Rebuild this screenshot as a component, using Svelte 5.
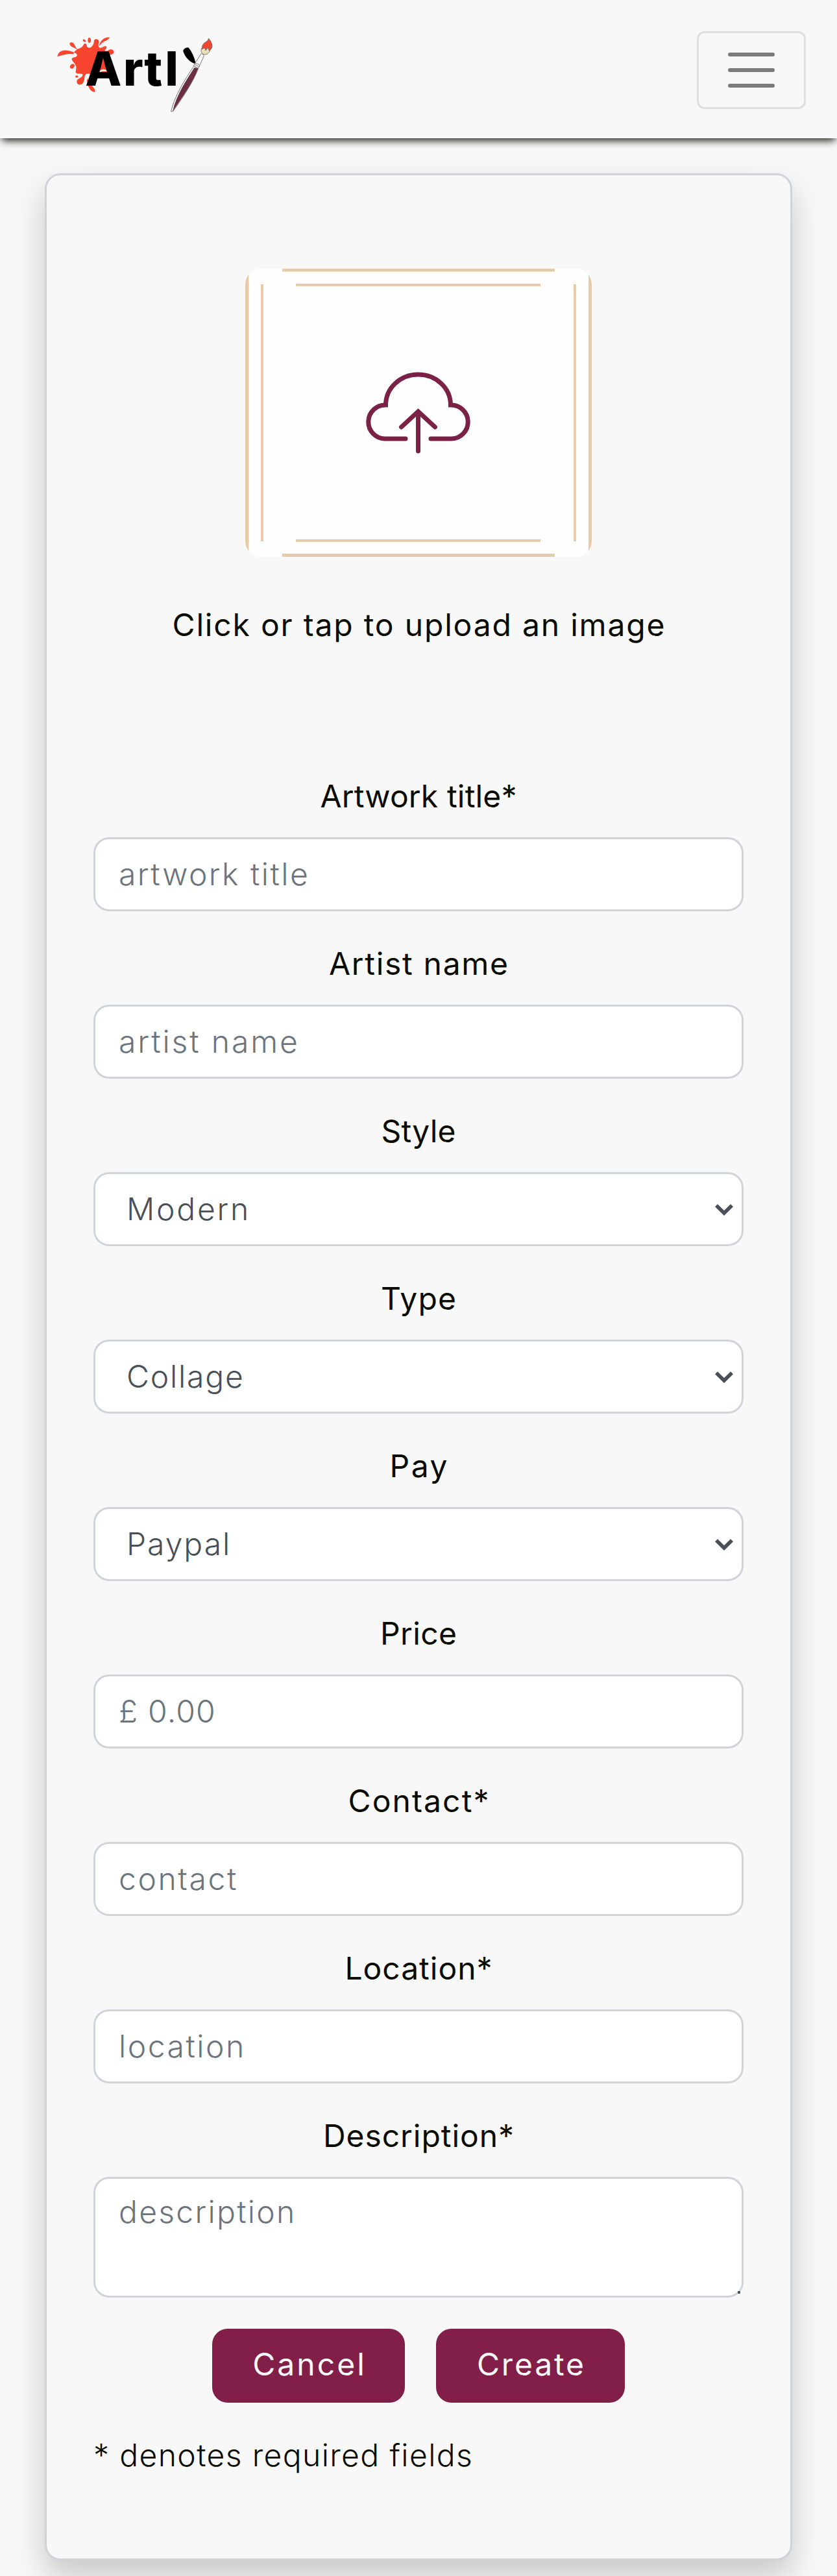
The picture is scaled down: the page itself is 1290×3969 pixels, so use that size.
<script>
  const fields = [
    { label: 'Artwork title*', span: 300, kind: 'input', text: 'artwork title', textSpan: 288 },
    { label: 'Artist name', span: 273, kind: 'input', text: 'artist name', textSpan: 272 },
    { label: 'Style', span: 111, kind: 'select', text: 'Modern', textSpan: 181 },
    { label: 'Type', span: 112, kind: 'select', text: 'Collage', textSpan: 175 },
    { label: 'Pay', span: 84, kind: 'select', text: 'Paypal', textSpan: 152 },
    { label: 'Price', span: 112, kind: 'input', text: '£ 0.00', textSpan: 144 },
    { label: 'Contact*', span: 213, kind: 'input', text: 'contact', textSpan: 179 },
    { label: 'Location*', span: 221, kind: 'input', text: 'location', textSpan: 186 },
    { label: 'Description*', span: 288, kind: 'textarea', text: 'description', textSpan: 266 }
  ];

  // Tracks the letters of a text so that its ink spans the given width.
  function track(node, span) {
    const style = getComputedStyle(node);
    const ctx = document.createElement('canvas').getContext('2d');
    ctx.font = `${style.fontWeight} ${style.fontSize} ${style.fontFamily}`;
    const text = node.placeholder || (node.options ? node.options[0].text : node.textContent.trim());
    const m = ctx.measureText(text);
    const ink = m.actualBoundingBoxRight + m.actualBoundingBoxLeft;
    const spacing = (span - ink) / (text.length - 1);
    node.style.letterSpacing = `${spacing}px`;
    if (node.tagName === 'SPAN') node.style.marginRight = `${-spacing}px`;
  }
</script>

<div class="page">
  <nav>
    <svg class="logo" viewBox="0 0 840 480" role="img" aria-label="Artly">
      <g fill="#f8452f">
        <path d="M147 137C165 131 169 130 176 117C181 106 191 111 191 121C192 133 206 133 213 126C225 116 224 104 225 96C229 88 243 89 247 98C250 109 241 118 248 128C256 138 267 123 277 123C288 126 282 137 274 142C280 152 292 140 302 138C314 138 320 149 314 157C307 165 294 161 285 176L300 210L290 250L252 240L218 250C205 257 202 246 189 252C177 259 184 273 177 286C174 298 164 305 153 300C142 294 143 281 151 276C160 269 175 263 172 254C168 248 145 256 140 244C139 234 147 224 139 210C136 201 122 192 122 183C124 172 140 178 146 168C149 157 137 158 132 151Z" />
        <path d="M55 171C60 146 84 132 132 152L131 160C99 156 78 167 55 171Z" />
        <path d="M113 116C108 105 125 102 132 113C139 123 137 127 149 138C133 131 117 126 113 116Z" />
        <path d="M248 124C251 99 274 79 297 83C290 99 263 99 248 124Z" />
        <path d="M192 270C191 300 205 336 229 335C235 318 210 310 192 270Z" />
        <ellipse cx="124" cy="216" rx="9" ry="12" transform="rotate(40 124 216)" />
        <ellipse cx="203" cy="96" rx="7" ry="12" />
        <ellipse cx="180" cy="98" rx="8" ry="5" transform="rotate(35 180 98)" />
        <ellipse cx="145" cy="264" rx="7" ry="5" />
      </g>
      <path d="M250 239C258 229 275 226 288 239Z" fill="#fff" />
      <text x="184 360 457 553" y="306">Artl</text>
      <path d="M637 146C637 135 652 128 661 130C676 145 691 180 695 205C670 200 645 175 637 146Z" fill="#000" />
      <g stroke="#777" stroke-width="3" stroke-linejoin="round">
        <path d="M688 213L707 226C680 295 635 360 590 425L581 425C596 355 643 281 688 213Z" fill="#fff" />
        <path d="M689 223L706 226C681 293 636 355 589 423C606 350 650 284 689 223Z" fill="#6b2f41" stroke="#5a2736" stroke-width="1" />
        <path d="M721 157L734 166L714 211L707 226L685 214L692 202Z" fill="#fff" />
        <path d="M692 202Q704 204 713 212M689 208Q700 211 710 219" fill="none" />
        <path d="M723 132C713 154 730 166 747 160C759 152 763 142 761 130Z" fill="#efe0b6" />
        <path d="M754 87C756 106 722 101 724 137L737 131L741 144L750 130L758 145C779 130 772 106 754 87Z" fill="#ee4431" />
      </g>
    </svg>
    <button class="toggler" aria-label="Toggle navigation"><i></i><i></i><i></i></button>
  </nav>

  <main class="card">
    <svg class="upload" viewBox="0 0 534 444" role="img" aria-label="Upload">
      <rect width="534" height="444" fill="#fefefe" />
      <g fill="#e8cba8">
        <rect width="5.5" height="444" />
        <rect x="529" width="5" height="444" />
        <rect x="57" width="420" height="4.5" />
        <rect x="57" y="439" width="420" height="5" />
        <rect x="24" y="24" width="4" height="396" />
        <rect x="506" y="24" width="4" height="396" />
        <rect x="78" y="23" width="377" height="4" />
        <rect x="78" y="417" width="377" height="4" />
      </g>
      <g fill="none" stroke="#7b2046" stroke-width="7" stroke-linecap="round">
        <path d="M247 262H215A26 26 0 0 1 216.5 210A50 47 0 0 1 316.5 210A26 26 0 0 1 318 262H286" />
        <path d="M266.5 281V221M240.5 244L266.5 220L292.5 244" />
      </g>
    </svg>
    <p class="caption"><span use:track={755}>Click or tap to upload an image</span></p>

    <form>
      {#each fields as f}
        <label>
          <span class="name" use:track={f.span}>{f.label}</span>
          {#if f.kind === 'input'}
            <input type="text" placeholder={f.text} use:track={f.textSpan} />
          {:else if f.kind === 'select'}
            <div class="stack">
              <select use:track={f.textSpan}><option>{f.text}</option></select>
              <svg class="chevron" viewBox="0 0 28 18"><path d="M2 2.2L14 14L26 2.2" /></svg>
            </div>
          {:else}
            <div class="stack">
              <textarea placeholder={f.text} use:track={f.textSpan}></textarea>
              <i class="grip"></i>
            </div>
          {/if}
        </label>
      {/each}
      <div class="actions">
        <button type="button" class="cancel"><span use:track={167}>Cancel</span></button>
        <button type="button" class="create"><span use:track={161}>Create</span></button>
      </div>
      <p class="note"><span use:track={580}>* denotes required fields</span></p>
    </form>
  </main>
</div>

<style>
  :global(body) {
    margin: 0;
    background: #f8f8f8;
  }
  .page {
    box-sizing: border-box;
    height: 3969px;
    overflow: hidden;
    background: #f8f8f8;
    color: #0a0c02;
    font: 400 48px/72px Inter, 'Liberation Sans', sans-serif;
  }
  .page * {
    box-sizing: border-box;
  }
  nav {
    position: relative;
    z-index: 1;
    display: flex;
    justify-content: space-between;
    align-items: flex-start;
    height: 213px;
    padding: 30px 48px 0 70px;
    background: #f8f8f8;
    box-shadow: 0 6px 12px -3px #0a0c02;
  }
  .logo {
    width: 280px;
    height: 160px;
  }
  .logo text {
    font: 800 219px Inter, 'Liberation Sans', sans-serif;
    fill: #000;
  }
  .toggler {
    display: flex;
    flex-direction: column;
    align-items: center;
    justify-content: center;
    gap: 18px;
    width: 168px;
    height: 120px;
    margin-top: 18px;
    padding: 0;
    border: 3px solid #dfdfdf;
    border-radius: 12px;
    background: transparent;
  }
  .toggler i {
    width: 72px;
    height: 6px;
    border-radius: 3px;
    background: #7b7b7b;
  }
  .card {
    display: flex;
    flex-direction: column;
    align-items: center;
    width: 1152px;
    height: 3678px;
    margin: 54px 0 0 69px;
    padding: 144px 72px 0;
    border: 3px solid #ced4da;
    border-radius: 24px;
    background: #f8f8f8;
    box-shadow: 0 24px 48px rgba(10, 16, 2, 0.2);
  }
  .upload {
    flex: none;
    width: 534px;
    height: 444px;
    border-radius: 24px;
  }
  .caption {
    display: flex;
    margin: 69px 0 193px;
    white-space: nowrap;
  }
  form {
    width: 1002px;
  }
  label {
    display: flex;
    flex-direction: column;
    align-items: center;
    gap: 27px;
    margin-bottom: 45px;
  }
  form > label:first-child {
    margin-top: -1px;
  }
  label:last-of-type {
    margin-bottom: 48px;
  }
  input,
  select,
  textarea {
    display: block;
    width: 1002px;
    height: 114px;
    margin: 0;
    padding: 0 36px 1px;
    border: 3px solid #ced4da;
    border-radius: 24px;
    background: #fff;
    color: #495057;
    font: inherit;
    font-weight: 350;
    appearance: none;
    resize: none;
    outline: none;
  }
  select {
    padding-left: 48px;
  }
  textarea {
    height: 186px;
    padding-top: 15px;
    overflow: hidden;
  }
  input::placeholder,
  textarea::placeholder {
    color: #6c757d;
    opacity: 1;
  }
  .stack {
    display: grid;
  }
  .stack > :global(*) {
    grid-area: 1 / 1;
  }
  .chevron {
    align-self: center;
    justify-self: end;
    width: 28px;
    height: 18px;
    margin: 2px 16px 0 0;
    fill: none;
    stroke: #495057;
    stroke-width: 5.6;
  }
  .grip {
    align-self: end;
    justify-self: end;
    width: 4px;
    height: 4px;
    margin: 0 5px 6px 0;
    border-radius: 1px;
    background: #4b5055;
  }
  .actions {
    display: flex;
    justify-content: center;
    gap: 48px;
  }
  .actions button {
    display: flex;
    align-items: center;
    justify-content: center;
    width: 297px;
    height: 114px;
    padding: 0 0 4px;
    border: 0;
    border-radius: 24px;
    background: #821f49;
    color: #f8f8f8;
    font: inherit;
  }
  .actions .create {
    width: 291px;
  }
  .note {
    display: flex;
    margin: 45px 0 0;
    font-weight: 350;
    white-space: nowrap;
  }
</style>
